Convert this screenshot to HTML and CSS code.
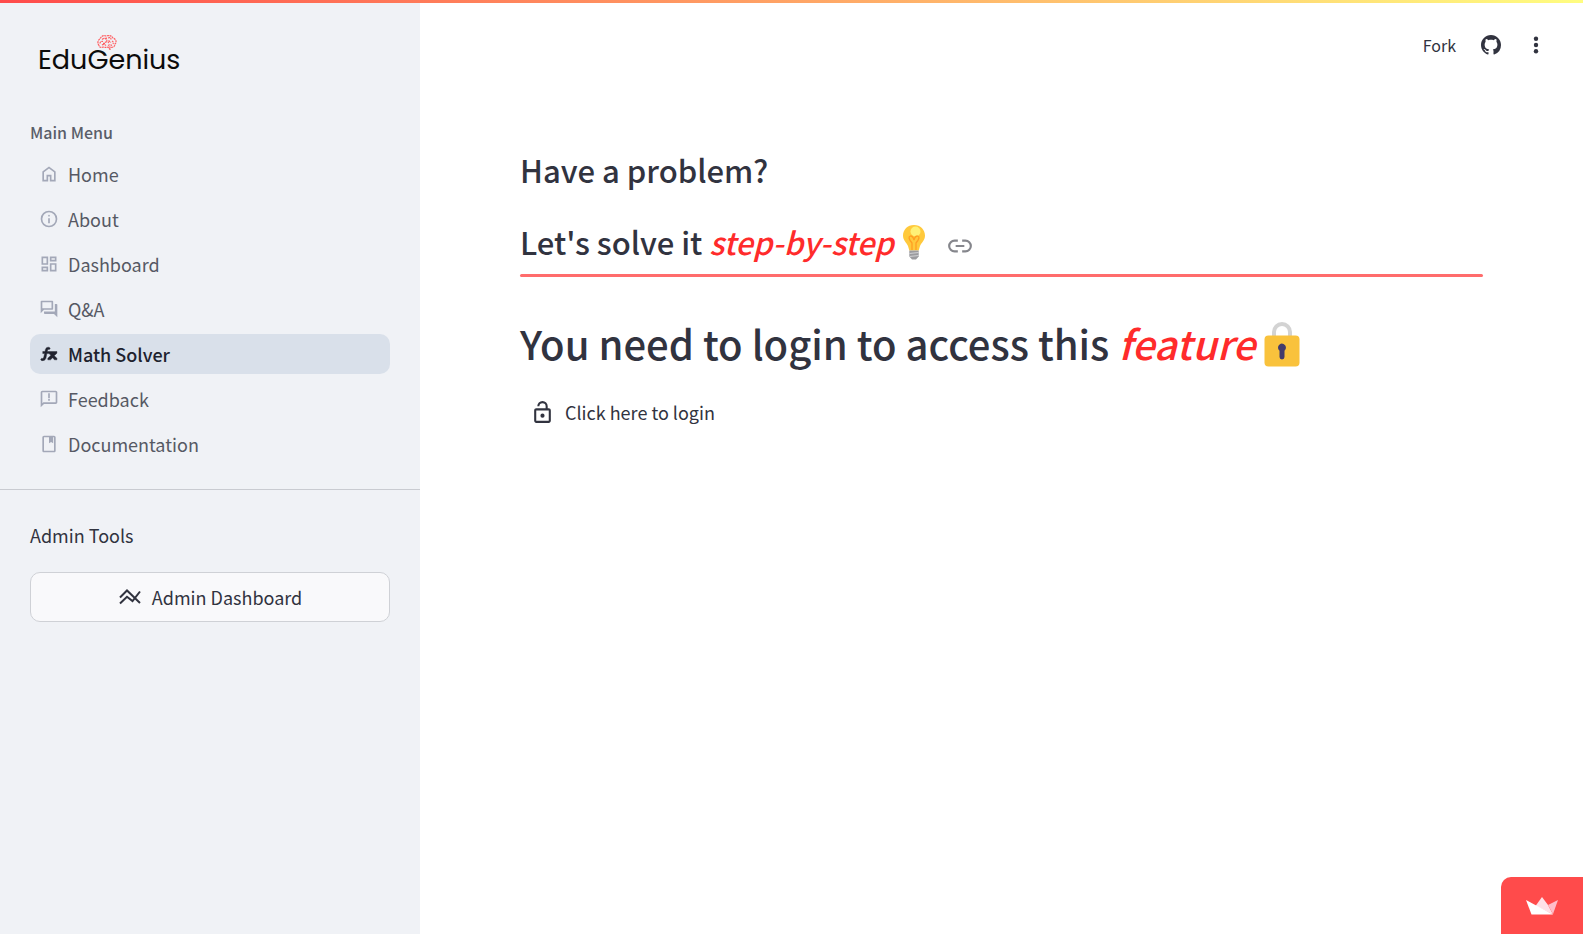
FILE: index.html
```html
<!DOCTYPE html>
<html lang="en">
<head>
<meta charset="utf-8">
<title>EduGenius - Math Solver</title>
<link rel="stylesheet" href="styles.css">
</head>
<body>
<div class="decoration"></div>
<div class="app">
  <aside class="sidebar">
    <a class="logo" href="#" aria-label="EduGenius home">
      <svg class="logo-brain" viewBox="0 0 20 15" aria-hidden="true">
        <path d="M2 10.500C0 8 1 5 3 4C4 1 7 0 9 1C12 0 15 1 16 3C19 4 20 7 18 9C18 12 15 13 13 12L13 14.500L11 12C9 13 7 12 6 12C4 13 2 12 2 10.500Z"/>
        <path d="M3 8.500Q3 6 6 6.500M5 4.500Q8 2 9 4.500M11 3Q14 2 14 4.500M15 6Q17 7 16 9M8 7.500Q11 5.500 12 8.500M5 10Q7 8.500 9 10.500M11 10.500Q13 9 15 10.500M11.500 5.500L14 7.500M6 8.300H8M9 2.500L10 6"/>
      </svg>
      <span class="logo-text">EduGenius</span>
    </a>
    <nav class="menu" aria-label="Main Menu">
      <h2 class="menu-title">Main Menu</h2>
      <a class="menu-item" href="#"><svg class="icon" viewBox="0 0 24 24"><path d="M6 19h3v-6h6v6h3v-9l-6-4.500L6 10v9Zm-2 2V9l8-6 8 6v12h-7v-6h-2v6H4Z"/></svg>Home</a>
      <a class="menu-item" href="#"><svg class="icon" viewBox="0 0 24 24"><path d="M11 17h2v-6h-2v6Zm1-8a1 1 0 1 0 0-2 1 1 0 0 0 0 2Zm0 13a10 10 0 1 1 0-20 10 10 0 0 1 0 20Zm0-2a8 8 0 1 0 0-16 8 8 0 0 0 0 16Z"/></svg>About</a>
      <a class="menu-item" href="#"><svg class="icon" viewBox="0 0 24 24"><path d="M13 9V3h8v6h-8ZM3 13V3h8v10H3Zm10 8V11h8v10h-8ZM3 21v-6h8v6H3Zm2-10h4V5H5v6Zm10 8h4v-6h-4v6Zm0-12h4V5h-4v2ZM5 19h4v-2H5v2Z"/></svg>Dashboard</a>
      <a class="menu-item" href="#"><svg class="icon" viewBox="0 0 24 24"><path d="M7 18c-.6 0-1-.4-1-1v-2h13V6h2c.6 0 1 .4 1 1v15l-4-4H7Zm-5-1V3c0-.6.4-1 1-1h13c.6 0 1 .4 1 1v9c0 .6-.4 1-1 1H6l-4 4Zm13-6V4H4v7h11Z"/></svg>Q&amp;A</a>
      <a class="menu-item active" href="#" aria-current="page"><svg class="icon" viewBox="0 0 24 24"><path d="M3.500 20q-1.100-.2-1.500-1.500l1.300-1.500q1.300 1.100 2.200-.4L6.800 11.500H4.500V9H7.200L7.700 6.500Q8.500 3.800 11 3.800 12.600 3.800 13.500 5L12.200 6.800Q11 5.700 10.300 7.200L10 9H21.500V11L18.300 14 21.500 17.200V19H18.500L16.400 16.500 13.800 19H10.600V17L14.300 13.600 12 11.500H9.400L8.300 17.200Q7.200 20.800 3.500 20Z"/></svg>Math Solver</a>
      <a class="menu-item" href="#"><svg class="icon" viewBox="0 0 24 24"><path d="M11 14h2v-2h-2v2Zm0-3h2V5h-2v6ZM2 22V4c0-1.100.9-2 2-2h16c1.100 0 2 .9 2 2v12c0 1.100-.9 2-2 2H6l-4 4Zm3.200-6H20V4H4v13.100L5.200 16Z"/></svg>Feedback</a>
      <a class="menu-item" href="#"><svg class="icon" viewBox="0 0 24 24"><path d="M6 22c-1.100 0-2-.9-2-2V4c0-1.100.9-2 2-2h12c1.100 0 2 .9 2 2v16c0 1.100-.9 2-2 2H6Zm0-2h12V4h-1v7l-2.500-1.500L12 11V4H6v16Z"/></svg>Documentation</a>
    </nav>
    <section class="admin">
      <p class="admin-title">Admin Tools</p>
      <button class="admin-button" type="button">
        <svg class="admin-icon" viewBox="0 0 24 24"><path d="M2 12.500 9 5.500 22 18M2 18.500 9 11.800 14.500 16 22 6.500"/></svg>
        Admin Dashboard
      </button>
    </section>
  </aside>
  <main class="main">
    <header class="toolbar">
      <a class="fork" href="#">Fork</a>
      <a class="tool" href="#" aria-label="View source on GitHub"><svg viewBox="0 0 16 16"><path d="M8 0C3.580 0 0 3.580 0 8c0 3.540 2.290 6.530 5.470 7.590.4.070.55-.17.55-.38 0-.19-.01-.82-.01-1.490-2.010.37-2.530-.49-2.690-.94-.09-.23-.48-.94-.82-1.130-.28-.15-.68-.52-.01-.53.63-.01 1.080.58 1.230.82.72 1.210 1.870.87 2.330.66.070-.52.28-.87.51-1.070-1.780-.2-3.640-.89-3.640-3.950 0-.87.31-1.590.82-2.150-.08-.2-.36-1.020.08-2.120 0 0 .67-.21 2.200.82.64-.18 1.320-.27 2-.27s1.360.09 2 .27c1.530-1.040 2.200-.82 2.200-.82.44 1.100.16 1.920.08 2.120.51.56.82 1.270.82 2.150 0 3.070-1.870 3.750-3.650 3.950.29.25.54.73.54 1.480 0 1.070-.01 1.930-.01 2.200 0 .21.15.46.55.38A8.010 8.010 0 0 0 16 8c0-4.420-3.580-8-8-8Z"/></svg></a>
      <button class="tool" type="button" aria-label="Menu"><svg viewBox="0 0 20 20"><circle cx="10" cy="3.700" r="2.200"/><circle cx="10" cy="10" r="2.200"/><circle cx="10" cy="16.300" r="2.200"/></svg></button>
    </header>
    <div class="content">
      <h2 class="subheading">Have a problem?</h2>
      <h2 class="subheading underlined">Let's solve it <em>step-by-step</em>
        <svg class="bulb" viewBox="0 0 24 36" role="img" aria-label="light bulb">
          <path fill="#ffc93c" d="M12 1C5.500 1 1 5.700 1 11.500c0 5 3.500 7 5 10.500l1.300 4.500h9.400L18 22c1.500-3.500 5-5.500 5-10.500C23 5.700 18.500 1 12 1Z"/>
          <circle cx="13.500" cy="7.500" r="5" fill="#fff176"/>
          <path fill="none" stroke="#ff9f22" stroke-width="1.300" d="M10 26V19Q5 13 8.500 12 11 12 12 16 13 12 15.500 12 19 13 14 19V26"/>
          <path fill="#9b9b9f" d="M7.300 26.500h9.400v6L14 35.500h-4l-2.700-3Z"/>
          <path stroke="#d0d0d3" stroke-width="1.200" d="m7.300 29.500 9.400-1M7.300 32.500l9.400-1"/>
        </svg>
        <a class="anchor" href="#" aria-label="Link to heading"><svg viewBox="0 0 24 24"><path d="M10 17H7A5 5 0 0 1 7 7H10M14 7H17A5 5 0 0 1 17 17H14M8 12H16"/></svg></a>
      </h2>
      <hr class="rule">
      <h1 class="heading">You need to login to access this <em>feature</em>
        <svg class="lock" viewBox="0 0 36 46" role="img" aria-label="locked">
          <path fill="none" stroke="#d3d3d3" stroke-width="4" d="M10 18V11a8 8 0 0 1 16 0v7"/>
          <rect x="0.500" y="14.500" width="35" height="31" rx="4" fill="#f9c23c"/>
          <path fill="#433b6b" d="M14 27a4 4 0 1 1 6.500 2.700V36a2.500 2.500 0 0 1-5 0V29.700A4 4 0 0 1 14 27Z"/>
        </svg>
      </h1>
      <a class="login" href="#">
        <svg viewBox="0 0 24 24"><path d="M6 8h9V6a3 3 0 0 0-6 0H7a5 5 0 0 1 10 0v2h1c1.100 0 2 .9 2 2v10c0 1.100-.9 2-2 2H6c-1.100 0-2-.9-2-2V10c0-1.100.9-2 2-2Zm0 12h12V10H6v10Zm6-3a2 2 0 1 0 0-4 2 2 0 0 0 0 4Z"/></svg>
        Click here to login
      </a>
    </div>
  </main>
</div>
<a class="badge" href="#" aria-label="Hosted with Streamlit">
  <svg viewBox="0 0 34 18"><path fill="#ffe1e8" d="M17 0 10.500 9 28 17.500 23 8Z"/><path fill="#ffbdc8" d="M33 3 23 8 28 17Z"/><path fill="#fff" d="M1 3 6.500 17.500H28Z"/></svg>
</a>
</body>
</html>
```
FILE: styles.css
```css
* { box-sizing: border-box; }

body {
  margin: 0;
  background: #fff;
  color: #31333f;
  font-family: "Source Sans Pro", "Noto Sans CJK SC", "Open Sans", sans-serif;
  font-size: 18px;
  line-height: 30px;
}

a { color: inherit; text-decoration: none; }
h1, h2, p { margin: 0; }
svg { display: block; fill: currentColor; }

.decoration {
  position: fixed;
  inset: 0 0 auto;
  height: 3px;
  background: linear-gradient(90deg, #ff4b4b, #fffd80);
}

.app { display: flex; min-height: 100vh; }

.sidebar { flex: 0 0 420px; background: #f0f2f6; }

.logo {
  display: block;
  position: relative;
  margin: 40px 38px 0;
  height: 40px;
  color: #0b0b0b;
}
.logo-text { font: 400 27px/40px "Poppins", "Lato", sans-serif; }
.logo-brain {
  position: absolute;
  left: 59px;
  top: -5px;
  width: 20px;
  height: 15px;
  fill: none;
  stroke: #ff5d60;
  stroke-width: 1.2;
  stroke-dasharray: 2 0.6;
}

.menu {
  display: flex;
  flex-direction: column;
  gap: 5px;
  padding: 39px 30px 25px;
  border-bottom: 1px solid #c9cbd1;
}
.menu-title {
  height: 30px;
  font-size: 16px;
  line-height: 26px;
  font-weight: 500;
  color: #5a5e69;
}
.menu-item {
  display: flex;
  align-items: center;
  gap: 9px;
  height: 40px;
  padding: 0 9px;
  border-radius: 10px;
  color: #565964;
}
.menu-item.active { background: #d9e0ea; color: #20222e; font-weight: 500; }
.icon { width: 20px; height: 20px; color: #a3a8b8; }
.active .icon { color: #20222e; stroke: currentColor; stroke-width: 0.5; }

.admin { padding: 30px; }
.admin-button {
  display: flex;
  align-items: center;
  justify-content: center;
  gap: 10px;
  width: 100%;
  height: 50px;
  margin-top: 22px;
  border: 1px solid #cfd1d6;
  border-radius: 10px;
  background: #f9f9fb;
  color: inherit;
  font: inherit;
}
.admin-icon { width: 24px; height: 24px; fill: none; stroke: currentColor; stroke-width: 2; }

.main { flex: 1; min-width: 0; }
.toolbar {
  display: flex;
  align-items: center;
  justify-content: flex-end;
  gap: 25px;
  height: 90px;
  padding: 0 37px;
}
.fork { font-size: 16px; }
.tool { padding: 0; border: 0; background: none; color: inherit; }
.tool svg { width: 20px; height: 20px; }

.content { padding: 59px 100px; }
.subheading {
  display: flex;
  align-items: center;
  height: 42px;
  margin-bottom: 30px;
  font-size: 31px;
  line-height: 42px;
  font-weight: 500;
  white-space: pre;
}
.subheading.underlined { margin-bottom: 11px; }
em { color: #ff2b2b; }
.bulb { width: 24px; height: 36px; margin-left: 8px; }
.anchor { margin-left: 21px; padding-top: 8px; }
.anchor svg { width: 26px; height: 26px; fill: none; stroke: #85868c; stroke-width: 2; }
.rule { height: 3px; margin: 0; border: 0; border-radius: 2px; background: #ff6c6c; }
.heading { font-size: 40px; line-height: 52px; font-weight: 500; margin-top: 40px; }
.lock { display: inline-block; width: 36px; height: 46px; vertical-align: -7px; }
.login { display: inline-flex; align-items: center; gap: 10px; margin-top: 28px; padding: 0 10px; }
.login svg { width: 25px; height: 25px; }

.badge {
  position: fixed;
  right: 0;
  bottom: 0;
  display: flex;
  align-items: center;
  justify-content: center;
  width: 82px;
  height: 57px;
  border-radius: 10px 0 0;
  background: #ff4b4b;
}
.badge svg { width: 34px; height: 18px; }
```
